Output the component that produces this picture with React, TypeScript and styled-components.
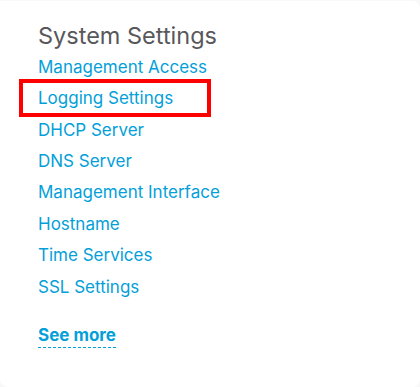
import React from "react";
import styled, { createGlobalStyle } from "styled-components";

const Global = createGlobalStyle`
  html, body { margin: 0; padding: 0; background: #f8f8f8; }
  body { font-family: Inter, "Open Sans", Arial, sans-serif; }
`;

const Card = styled.div`
  margin-top: 1px;
  height: 386px;
  box-sizing: border-box;
  background: #ffffff;
  border-radius: 0 8px 8px 8px;
  padding: 20px 0 0 38px;
`;

const Title = styled.h2`
  margin: 0;
  font-size: 23.5px;
  line-height: 30px;
  font-weight: 400;
  color: #58585b;
`;

const List = styled.ul`
  list-style: none;
  margin: 0;
  padding: 0;
  display: flex;
  flex-direction: column;
`;

const Item = styled.li`
  position: relative;
  height: 31.43px;
  display: flex;
  align-items: center;
`;

const Link = styled.a`
  font-size: 17px;
  color: #049fd9;
  text-decoration: none;
  cursor: pointer;
`;

const Highlight = styled.span`
  position: absolute;
  left: -19px;
  top: -3px;
  width: 192px;
  height: 38px;
  box-sizing: border-box;
  border: 4px solid #ff0000;
  pointer-events: none;
`;

const SeeMore = styled.a`
  display: inline-block;
  margin-top: 23px;
  font-size: 17px;
  font-weight: 700;
  color: #049fd9;
  border-bottom: 1px dashed #049fd9;
  padding-bottom: 2px;
  cursor: pointer;
`;

const items = [
  "Management Access",
  "Logging Settings",
  "DHCP Server",
  "DNS Server",
  "Management Interface",
  "Hostname",
  "Time Services",
  "SSL Settings",
];

export default function App() {
  return (
    <>
      <Global />
      <Card>
        <Title>System Settings</Title>
        <List>
          {items.map((t) => (
            <Item key={t}>
              <Link>{t}</Link>
              {t === "Logging Settings" && <Highlight />}
            </Item>
          ))}
        </List>
        <SeeMore>See more</SeeMore>
      </Card>
    </>
  );
}
